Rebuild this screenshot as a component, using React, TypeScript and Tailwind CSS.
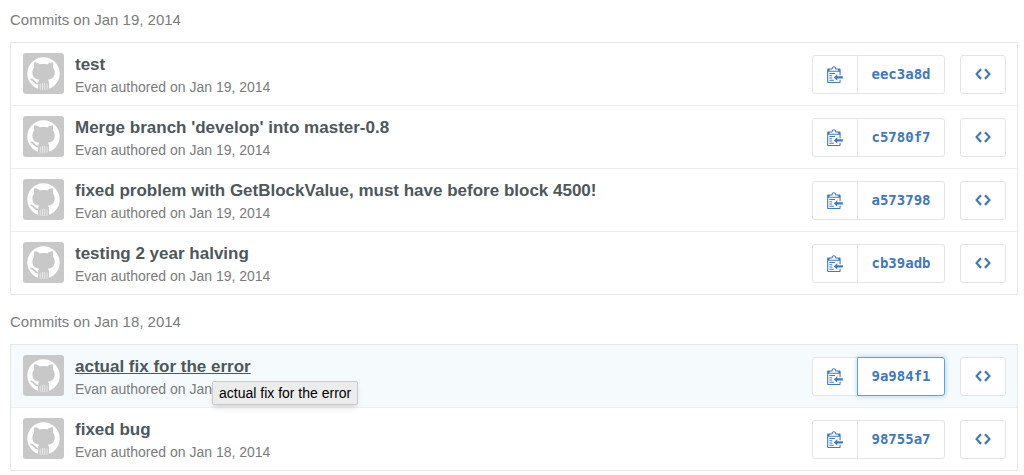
import React from "react";
import clsx from "clsx";

interface ICommit {
    sha: string;
    title: string;
    date: string;
    active?: boolean;
}

interface IGroup {
    date: string;
    commits: ICommit[];
}

const groups: IGroup[] = [
    {
        date: "Jan 19, 2014",
        commits: [
            { sha: "eec3a8d", title: "test", date: "Jan 19, 2014" },
            {
                sha: "c5780f7",
                title: "Merge branch 'develop' into master-0.8",
                date: "Jan 19, 2014",
            },
            {
                sha: "a573798",
                title: "fixed problem with GetBlockValue, must have before block 4500!",
                date: "Jan 19, 2014",
            },
            {
                sha: "cb39adb",
                title: "testing 2 year halving",
                date: "Jan 19, 2014",
            },
        ],
    },
    {
        date: "Jan 18, 2014",
        commits: [
            {
                sha: "9a984f1",
                title: "actual fix for the error",
                date: "Jan 18, 2014",
                active: true,
            },
            { sha: "98755a7", title: "fixed bug", date: "Jan 18, 2014" },
        ],
    },
];

const Avatar: React.FC = () => (
    <svg
        viewBox="0 0 41 41"
        className="size-[41px] shrink-0 rounded-[3px] bg-[#c8c8c8]"
        aria-hidden="true"
    >
        <circle cx="20.5" cy="20.5" r="16.2" fill="#fff" />
        <path
            fill="#c8c8c8"
            d="M11.4 9.4c1.8-.2 3.8.8 5.4 2 2.4-.6 5-.6 7.4 0 1.6-1.2 3.6-2.2 5.4-2 .8 1.900.7 3.400.2 4.800 1.300 1.500 1.900 3.300 1.900 5.300 0 4.800-2.700 6.800-7 7.300 1 .9 1.400 2.100 1.400 3.500v6.400H15v-6.400c0-1.400.4-2.600 1.400-3.500-4.300-.5-7-2.500-7-7.300 0-2 .6-3.800 1.900-5.300-.5-1.400-.7-2.900.1-4.800z"
        />
        <path
            fill="none"
            stroke="#c8c8c8"
            strokeWidth="1.8"
            strokeLinecap="round"
            d="M8.3 26.4c2.8.1 2.8 4.6 7.7 4.4"
        />
        <path
            stroke="#fff"
            strokeWidth=".8"
            strokeOpacity=".8"
            d="M17.2 30.500v6M19.500 30v6.500M21.700 30v6.500M24 30.500v6"
        />
    </svg>
);

const CopyIcon: React.FC = () => (
    <svg
        viewBox="0 0 14 16"
        className="h-[18px] w-4"
        fill="currentColor"
        aria-hidden="true"
    >
        <path d="M2 13h4v1H2v-1zm5-6H2v1h5V7zm2 3V8l-3 3 3 3v-2h5v-2H9zM4.5 9H2v1h2.5V9zM2 12h2.5v-1H2v1zm9 1h1v2c-.02.28-.11.52-.3.7-.19.18-.42.28-.7.3H1c-.55 0-1-.45-1-1V4c0-.55.45-1 1-1h3c0-1.11.89-2 2-2 1.11 0 2 .89 2 2h3c.55 0 1 .45 1 1v5h-1V6H1v9h10v-2zM2 5h8c0-.55-.45-1-1-1H8c-.55 0-1-.45-1-1s-.45-1-1-1-1 .45-1 1-.45 1-1 1H3c-.55 0-1 .45-1 1z" />
    </svg>
);

const CodeIcon: React.FC = () => (
    <svg
        viewBox="0 0 14 16"
        className="h-[18px] w-4"
        fill="currentColor"
        aria-hidden="true"
    >
        <path d="M9.5 3L8 4.5 11.5 8 8 11.5 9.5 13 14 8 9.5 3zm-5 0L0 8l4.5 5L6 11.5 2.5 8 6 4.5 4.5 3z" />
    </svg>
);

const CommitRow: React.FC<{ commit: ICommit }> = ({ commit }) => (
    <li
        className={clsx("flex items-start gap-[11px] pt-[10px] pr-[11px] pb-2 pl-3", {
            "bg-[#f5fafc]": commit.active,
        })}
    >
        <Avatar />
        <div className="relative min-w-0 grow">
            <a
                href={`#${commit.sha}`}
                className={clsx(
                    "block w-max text-[17px] leading-6 font-bold text-[#4e575b]",
                    { "underline": commit.active }
                )}
            >
                {commit.title}
            </a>
            <p className="text-sm leading-5 text-[#7b7b7b]">
                Evan authored on {commit.date}
            </p>
            {commit.active && (
                <div
                    role="tooltip"
                    className="absolute top-[26px] left-[137px] rounded-[2px] border border-[#cacaca] bg-[#ececec] px-[6px] text-sm leading-[22px] whitespace-nowrap text-black shadow-md"
                >
                    {commit.title}
                </div>
            )}
        </div>
        <div className="mt-[2px] flex shrink-0 text-[#4078c0]">
            <button
                type="button"
                aria-label="Copy the full SHA"
                className="flex h-[39px] w-[46px] items-center justify-center rounded-l-[3px] border border-[#e4e4e4] bg-white pb-[2px]"
            >
                <CopyIcon />
            </button>
            <a
                href={`#${commit.sha}`}
                className={clsx(
                    "-ml-px flex h-[39px] w-[88px] items-center justify-center rounded-r-[3px] border bg-white pb-[2px] [font-family:DejaVu_Sans_Mono,monospace] text-sm font-bold",
                    commit.active
                        ? "border-[#51a7e8] shadow-[0_0_5px_rgba(81,167,232,0.5)]"
                        : "border-[#e4e4e4]"
                )}
            >
                {commit.sha}
            </a>
            <a
                href={`#tree-${commit.sha}`}
                aria-label="Browse the repository at this point"
                className="ml-[15px] flex h-[39px] w-[46px] items-center justify-center rounded-[3px] border border-[#e4e4e4] bg-white pb-[2px]"
            >
                <CodeIcon />
            </a>
        </div>
    </li>
);

const App: React.FC = () => {
    return (
        <main className="bg-white pr-[6px] pl-[10px] font-[family-name:'Liberation_Sans',Arial,sans-serif]">
            {groups.map(group => (
                <section key={group.date} className="pb-[7px] last:pb-0">
                    <h2 className="pt-[10px] pb-3 text-[15px] leading-5 text-[#7b7b7b]">
                        Commits on {group.date}
                    </h2>
                    <ol className="divide-y divide-[#eeeeee] border border-[#e8e8e8]">
                        {group.commits.map(commit => (
                            <CommitRow key={commit.sha} commit={commit} />
                        ))}
                    </ol>
                </section>
            ))}
        </main>
    );
};

export default App;
